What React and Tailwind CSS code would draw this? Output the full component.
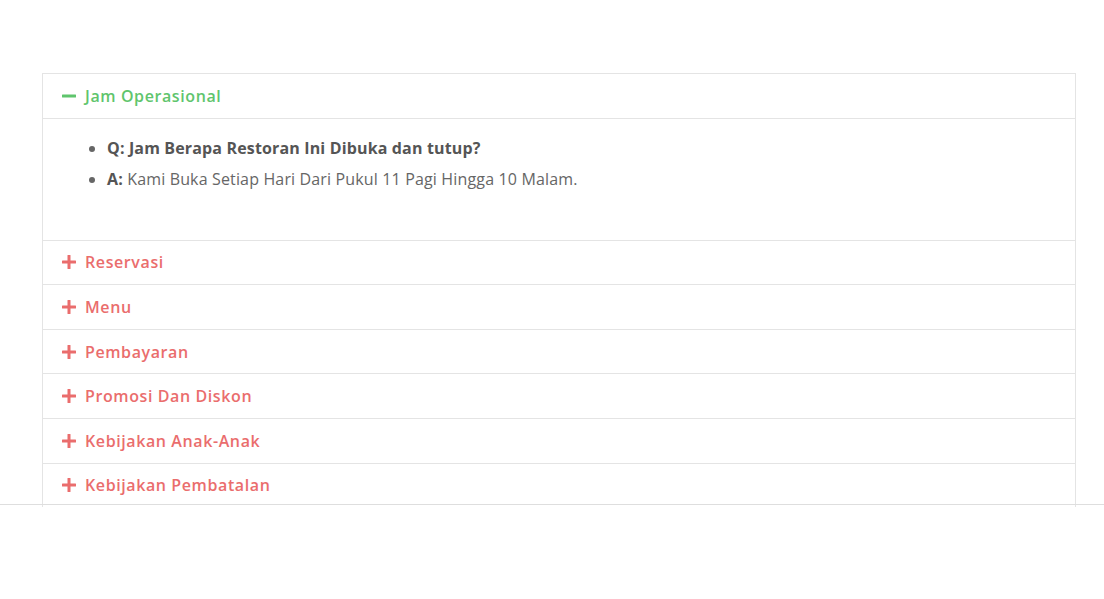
import React, { useState } from 'react';

const items = [
  'Jam Operasional',
  'Reservasi',
  'Menu',
  'Pembayaran',
  'Promosi Dan Diskon',
  'Kebijakan Anak-Anak',
  'Kebijakan Pembatalan',
];

const Icon = ({ open }) => (
  <svg width="14" height="14" viewBox="0 0 14 14" className="shrink-0">
    <rect x="0" y="5.5" width="14" height="3" rx="0.5" fill="currentColor" />
    {!open && <rect x="5.5" y="0" width="3" height="14" rx="0.5" fill="currentColor" />}
  </svg>
);

export default function App() {
  const [openIdx, setOpenIdx] = useState(0);

  return (
    <div className="w-[1104px] h-[599px] bg-white overflow-hidden relative" style={{ fontFamily: '"Open Sans", "Noto Sans", sans-serif' }}>
      <div className="pt-[73px] px-[42px]">
        <div className="w-[1034px] border border-[#e4e4e4] border-b-0">
          {items.map((label, i) => {
            const open = openIdx === i;
            return (
              <div key={label} className={i < items.length - 1 ? 'border-b border-[#e4e4e4]' : ''}>
                <button
                  onClick={() => setOpenIdx(open ? -1 : i)}
                  className={`w-full h-[43.6px] flex items-center gap-[9px] pl-[19px] text-left text-[16px] font-semibold tracking-[0.6px] ${
                    open ? 'text-[#5fc56d]' : 'text-[#ea6d6d]'
                  }`}
                >
                  <Icon open={open} />
                  <span>{label}</span>
                </button>
                {open && (
                  <div className="border-t border-[#e4e4e4] h-[122px] pt-[14px]">
                    <ul className="list-disc pl-[64px] text-[16px] tracking-[0.15px] leading-[31px] text-[#666] marker:text-[#666]">
                      <li className="font-bold text-[#555]">Q: Jam Berapa Restoran Ini Dibuka dan tutup?</li>
                      <li>
                        <span className="font-bold text-[#555]">A:</span> Kami Buka Setiap Hari Dari Pukul 11 Pagi Hingga 10 Malam.
                      </li>
                    </ul>
                  </div>
                )}
              </div>
            );
          })}
        </div>
      </div>
      <div className="absolute left-0 right-0 top-[504px] border-t border-[#dedede]" />
    </div>
  );
}
